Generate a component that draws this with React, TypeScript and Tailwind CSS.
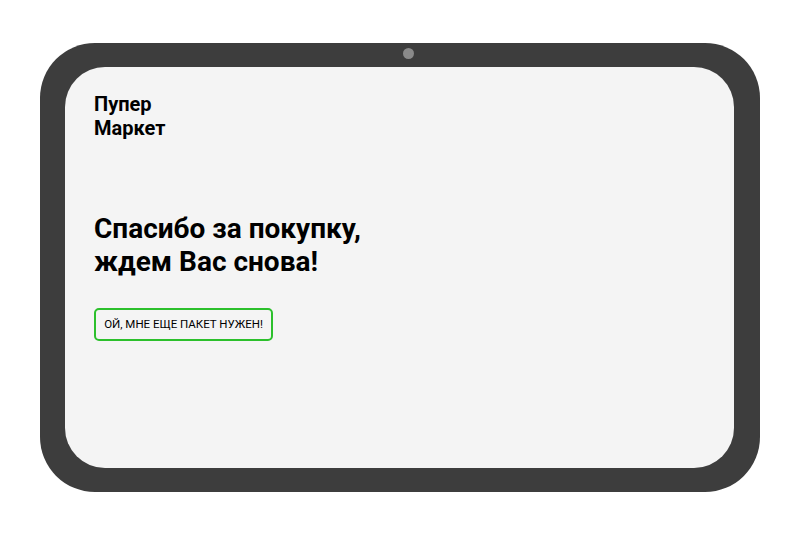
export default function App() {
  return (
    <div className="w-[800px] h-[537px] bg-white pt-[43px] pl-[40px]" style={{ fontFamily: 'Roboto, "Noto Sans", sans-serif' }}>
      <div className="relative w-[720px] h-[449px] rounded-[55px] bg-[#3d3d3d] pt-[24px] pb-[24px] pl-[25px] pr-[26px]">
        <div className="absolute left-[363px] top-[5px] w-[11px] h-[11px] rounded-full bg-[#8a8a8a]" />
        <div className="w-full h-full rounded-[40px] bg-[#f4f4f4] pl-[29px] pt-[25px] flex flex-col items-start">
          <div className="text-[20px] font-bold leading-[24px] text-black">
            <div>Пупер</div>
            <div>Маркет</div>
          </div>
          <h1 className="mt-[72px] text-[28px] font-bold leading-[33px] text-black">
            <div>Спасибо за покупку,</div>
            <div>ждем Вас снова!</div>
          </h1>
          <button className="mt-[30px] h-[33px] w-[179px] rounded-[5px] border-2 border-[#2cc02c] bg-[#f4f4f4] text-[11.5px] leading-none text-black uppercase flex items-center justify-center">
            Ой, мне еще пакет нужен!
          </button>
        </div>
      </div>
    </div>
  );
}
